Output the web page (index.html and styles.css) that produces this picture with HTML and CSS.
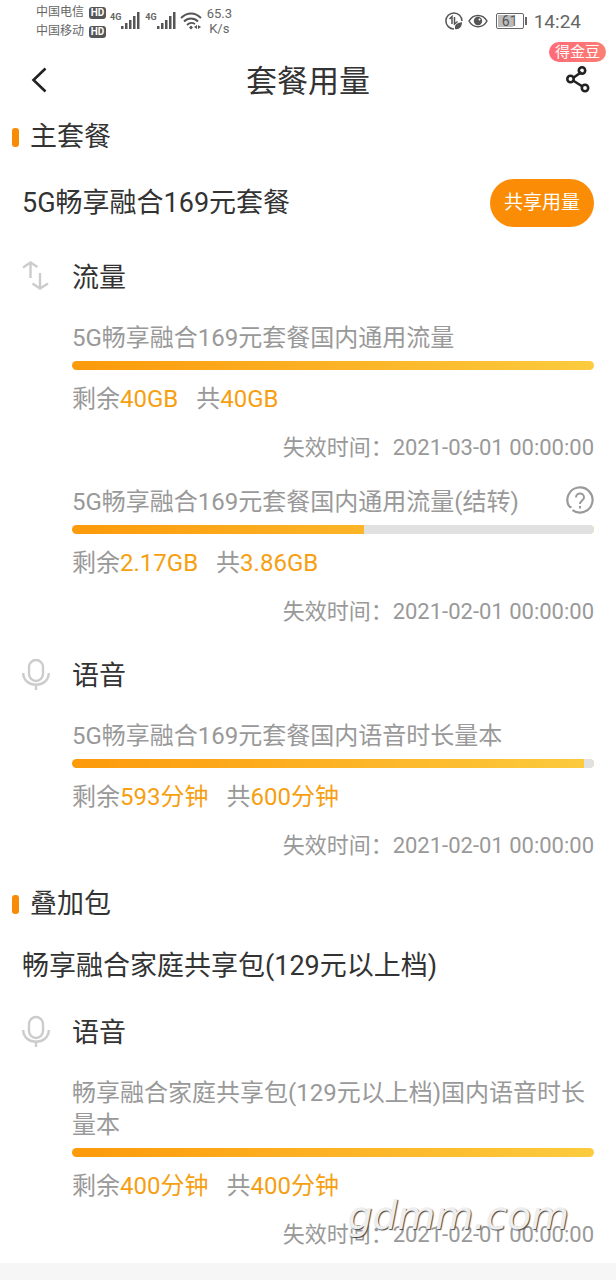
FILE: index.html
```
<!DOCTYPE html>
<html lang="zh-CN">
<head>
  <meta charset="UTF-8">
  <meta name="viewport" content="width=device-width, initial-scale=1">
  <title>套餐用量</title>
  <link rel="stylesheet" href="styles.css">
</head>
<body>
  <div class="page">
    <div class="status-bar">
      <div class="carriers">
        <div class="carrier">中国电信<span class="hd">HD</span></div>
        <div class="carrier">中国移动<span class="hd">HD</span></div>
      </div>
      <div class="signal">
        <span class="network">4G</span>
        <svg width="20" height="18" viewBox="0 0 20 18" fill="#555"><path d="M0 14h2.500v3H0zM4 11h2.500v6H4zM8 8h2.500v9H8zM12 4h2.500v13H12zM16 0h2.500v17H16z"/></svg>
      </div>
      <div class="signal">
        <span class="network">4G</span>
        <svg width="20" height="18" viewBox="0 0 20 18" fill="#555"><path d="M0 14h2.500v3H0zM4 11h2.500v6H4zM8 8h2.500v9H8zM12 4h2.500v13H12zM16 0h2.500v17H16z"/></svg>
      </div>
      <svg class="wifi" width="22" height="18" viewBox="0 0 22 18" fill="none" stroke="#555" stroke-width="1.8">
        <path d="M1 6C7 0 15 0 21 6M4 9.500C8 5.500 14 5.500 18 9.500M7 13C9.500 10.500 12.500 10.500 15 12"/>
        <path d="M11 13.500l2 2-2 2-2-2zM17 13v4l-3-2zM18 13v4l3-2z" fill="#555" stroke="none"/>
      </svg>
      <div class="speed">65.3<br>K/s</div>
      <div class="status-right">
        <svg width="20" height="20" viewBox="0 0 20 20" fill="none" stroke="#555" stroke-width="1.500">
          <path d="M10 17.900A8 8 0 1 1 17.900 10"/>
          <path d="M5.500 8L8 5.500V13M10.500 6v7l3-2.500"/>
          <path d="M11 18c-1-5 3-6 7-7 0 5-3 8-7 7z" fill="#555" stroke="none"/>
        </svg>
        <svg class="eye" width="20" height="16" viewBox="0 0 20 16" fill="none" stroke="#555" stroke-width="1.500">
          <path d="M1 8C5 .500 15 .500 19 8 15 15.500 5 15.500 1 8z"/>
          <circle cx="10" cy="8" r="4.200" fill="#555" stroke="none"/>
          <circle cx="11.500" cy="6.500" r="1" fill="#fff" stroke="none"/>
        </svg>
        <span class="battery">61</span>
        <span class="clock">14:24</span>
      </div>
    </div>

    <header class="header">
      <button class="icon-button" type="button" aria-label="返回">
        <svg width="28" height="28" viewBox="0 0 28 28" fill="none" stroke="#222" stroke-width="2.600"><path d="M21.500 2.500L9.500 14l12 11.500"/></svg>
      </button>
      <h1>套餐用量</h1>
      <button class="icon-button share" type="button" aria-label="分享">
        <svg width="28" height="28" viewBox="0 0 28 28" fill="none" stroke="#222" stroke-width="2.600">
          <path d="M9 12l8.500-6M9 14.500l9.500 6"/>
          <circle cx="6.500" cy="13" r="3.200"/>
          <circle cx="18" cy="4.500" r="3.200"/>
          <circle cx="21" cy="22" r="3.200"/>
        </svg>
        <span class="badge">得金豆</span>
      </button>
    </header>

    <main>
      <section class="group">
        <h2>主套餐</h2>
        <div class="plan plan-shared">
          <h3>5G畅享融合169元套餐</h3>
          <button class="share-button" type="button">共享用量</button>
        </div>

        <div class="service">
          <svg class="service-icon" width="28" height="34" viewBox="0 0 28 34" fill="none" stroke="#ccc" stroke-width="2.400">
            <path d="M1 9.500l7.500-5 7 4.500M8.500 4.500V20M10.500 25.500l7.500 5 8-5M18 30.500V15"/>
          </svg>
          <div class="service-body">
            <h4>流量</h4>
            <div class="items">
              <div class="item">
                <p class="name">5G畅享融合169元套餐国内通用流量</p>
                <div class="bar"><div class="rest" style="width: 0%"></div></div>
                <p class="amount"><span>剩余<b>40GB</b></span><span>共<b>40GB</b></span></p>
                <p class="expire">失效时间：2021-03-01 00:00:00</p>
              </div>
              <div class="item">
                <div class="name-row">
                  <p class="name">5G畅享融合169元套餐国内通用流量(结转)</p>
                  <button class="help" type="button" aria-label="结转说明">
                    <svg width="28" height="28" viewBox="0 0 28 28" fill="none" stroke="#999" stroke-width="2.200">
                      <path d="M3.200 20.500A12.600 12.600 0 1 1 6.500 24.100M3.200 20.500l2.300 1"/>
                      <path d="M10 11.500c0-5.500 8-5.500 8 0 0 3-4 3.200-4 6.500M14 20v2.500" stroke-width="2"/>
                    </svg>
                  </button>
                </div>
                <div class="bar"><div class="rest" style="width: 44%"></div></div>
                <p class="amount"><span>剩余<b>2.17GB</b></span><span>共<b>3.86GB</b></span></p>
                <p class="expire">失效时间：2021-02-01 00:00:00</p>
              </div>
            </div>
          </div>
        </div>

        <div class="service">
          <svg class="service-icon" width="28" height="34" viewBox="0 0 28 34" fill="none" stroke="#ccc" stroke-width="2.400">
            <rect x="7" y="4" width="14" height="21" rx="7"/>
            <path d="M1.200 17c0 15.500 25.600 15.500 25.600 0M14 28.500V34"/>
          </svg>
          <div class="service-body">
            <h4>语音</h4>
            <div class="items">
              <div class="item">
                <p class="name">5G畅享融合169元套餐国内语音时长量本</p>
                <div class="bar"><div class="rest" style="width: 2%"></div></div>
                <p class="amount"><span>剩余<b>593分钟</b></span><span>共<b>600分钟</b></span></p>
                <p class="expire">失效时间：2021-02-01 00:00:00</p>
              </div>
            </div>
          </div>
        </div>
      </section>

      <section class="group">
        <h2>叠加包</h2>
        <div class="plan">
          <h3>畅享融合家庭共享包(129元以上档)</h3>
        </div>

        <div class="service">
          <svg class="service-icon" width="28" height="34" viewBox="0 0 28 34" fill="none" stroke="#ccc" stroke-width="2.400">
            <rect x="7" y="4" width="14" height="21" rx="7"/>
            <path d="M1.200 17c0 15.500 25.600 15.500 25.600 0M14 28.500V34"/>
          </svg>
          <div class="service-body">
            <h4>语音</h4>
            <div class="items">
              <div class="item">
                <p class="name">畅享融合家庭共享包(129元以上档)国内语音时长量本</p>
                <div class="bar"><div class="rest" style="width: 0%"></div></div>
                <p class="amount"><span>剩余<b>400分钟</b></span><span>共<b>400分钟</b></span></p>
                <p class="expire">失效时间：2021-02-01 00:00:00</p>
              </div>
            </div>
          </div>
        </div>
      </section>
    </main>
    <div class="watermark">gdmm.com</div>
  </div>
</body>
</html>
```
FILE: styles.css
```
* {
  box-sizing: border-box;
}

body {
  margin: 0;
  background-color: #f6f6f6;
  color: #333;
  font-family: Roboto, "Noto Sans CJK SC", sans-serif;
}

h1, h2, h3, h4, p {
  margin: 0;
  font-weight: 400;
}

button {
  border: none;
  padding: 0;
  background: none;
  font-family: inherit;
  cursor: pointer;
}

svg {
  display: block;
}

.page {
  position: relative;
  background-color: #fff;
  padding-bottom: 12px;
}

/* phone status bar */
.status-bar {
  display: flex;
  align-items: center;
  height: 42px;
  padding: 0 35px 0 36px;
  color: #666;
}

.carriers {
  padding-top: 2px;
}

.carrier {
  display: flex;
  align-items: center;
  gap: 5px;
  font-size: 12px;
  line-height: 19px;
}

.hd {
  width: 17px;
  border-radius: 3px;
  background-color: #555;
  color: #fff;
  font-size: 10px;
  font-weight: 700;
  line-height: 12px;
  text-align: center;
}

.signal {
  display: flex;
  align-items: flex-start;
  margin-left: 4px;
}

.network {
  font-size: 9px;
  font-weight: 700;
  line-height: 10px;
}

.wifi {
  margin-left: 3px;
}

.speed {
  margin-left: 5px;
  font-size: 13px;
  line-height: 15px;
  text-align: center;
}

.status-right {
  display: flex;
  align-items: center;
  margin-left: auto;
}

.eye {
  margin: 0 8px 0 4px;
}

.battery {
  position: relative;
  width: 28px;
  border: 1px solid #666;
  border-radius: 2px;
  background: linear-gradient(90deg, #bbb 62%, #fff 62%) content-box;
  padding: 1px;
  color: #555;
  font-size: 14px;
  line-height: 12px;
  text-align: center;
}

.battery::after {
  content: "";
  position: absolute;
  top: 3px;
  right: -4px;
  width: 2px;
  height: 8px;
  background-color: #666;
}

.clock {
  margin-left: 10px;
  font-size: 19px;
}

/* title bar */
.header {
  display: flex;
  align-items: center;
  justify-content: space-between;
  height: 75px;
  padding: 0 24px;
}

.header h1 {
  padding-top: 4px;
  font-size: 31px;
  line-height: 40px;
}

.icon-button {
  position: relative;
}

.badge {
  position: absolute;
  right: -14px;
  bottom: 32px;
  width: 57px;
  border-radius: 10px;
  background: linear-gradient(90deg, #ff6a76, #fb7f73);
  color: #fff;
  font-size: 15px;
  line-height: 20px;
}

/* package groups */
.group {
  padding: 0 22px;
}

.group + .group {
  margin-top: 22px;
}

.group h2 {
  display: flex;
  align-items: center;
  gap: 11px;
  margin-left: -10px;
  font-size: 27px;
  line-height: 40px;
}

.group h2::before {
  content: "";
  width: 7px;
  height: 19px;
  border-radius: 3px;
  background-color: #f98c06;
}

.plan {
  display: flex;
  align-items: center;
  justify-content: space-between;
  margin: 22px 0 27px;
}

.plan-shared {
  margin-bottom: 31px;
}

.plan h3 {
  font-size: 27px;
  line-height: 40px;
}

.share-button {
  border-radius: 24px;
  padding: 0 14px;
  background-color: #fb8c06;
  color: #fff;
  font-size: 19px;
  line-height: 48px;
}

.service {
  display: flex;
  gap: 22px;
}

.service + .service {
  margin-top: 28px;
}

.service-icon {
  flex: none;
}

.service-body {
  flex: 1;
}

.service h4 {
  margin-bottom: 24px;
  font-size: 27px;
  line-height: 40px;
}

.items {
  display: flex;
  flex-direction: column;
  gap: 22px;
}

.item {
  color: #999;
  font-size: 24px;
  line-height: 32px;
}

.name-row {
  display: flex;
  align-items: flex-start;
  justify-content: space-between;
}

/* the gradient spans the whole bar, the used part covers its end */
.bar {
  display: flex;
  justify-content: flex-end;
  height: 9px;
  margin: 7px 0 13px;
  border-radius: 5px;
  background: linear-gradient(90deg, #fc9a0b, #fccb3e);
  overflow: hidden;
}

.rest {
  background-color: #e1e1e1;
}

.amount {
  display: flex;
  gap: 18px;
}

.amount b {
  color: #f69f12;
  font-weight: 400;
}

.expire {
  margin-top: 17px;
  font-size: 22px;
  text-align: right;
}

.watermark {
  position: absolute;
  right: 47px;
  bottom: 24px;
  color: #eee;
  font-family: "DejaVu Sans", sans-serif;
  font-size: 39px;
  font-style: italic;
  line-height: 46px;
  text-shadow: 1px 1px 1px #444;
}
```
